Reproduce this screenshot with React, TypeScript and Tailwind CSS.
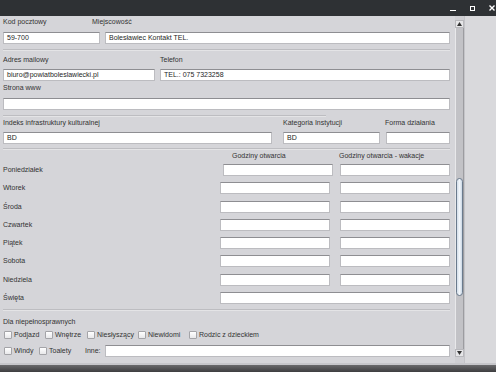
import React from "react";

const F = "font-['Liberation_Sans',Arial,sans-serif]";

function Inp({ w, ml = 0, mt = 0, v = "" }: { w: number; ml?: number; mt?: number; v?: string }) {
  return (
    <div
      className="h-[12px] shrink-0 bg-white border border-[#bcbcc0] border-t-[#8e8e92] text-[7px] leading-[10px] pl-[3px] text-[#1e1e1e] whitespace-nowrap overflow-hidden"
      style={{ width: w, marginLeft: ml, marginTop: mt }}
    >
      {v}
    </div>
  );
}

function Lbl({ w, children }: { w?: number; children: React.ReactNode }) {
  return (
    <div className="h-[8px] shrink-0 text-[7px] leading-[8px] text-[#333] whitespace-nowrap" style={w ? { width: w } : undefined}>
      {children}
    </div>
  );
}

function Sep({ w = 447, mt }: { w?: number; mt: number }) {
  return <div className="h-[2px] border-t border-[#bdbdc1] border-b border-b-[#e4e4e6] ml-[3px]" style={{ width: w, marginTop: mt }} />;
}

function Cb({ w, label }: { w: number; label: string }) {
  return (
    <div className="flex items-center shrink-0" style={{ width: w }}>
      <div className="w-[8px] h-[8px] border border-[#a4a4a8] bg-gradient-to-b from-white to-[#e8e8ea] rounded-[1px]" />
      <span className="ml-[2px] text-[7px] leading-[8px] text-[#333]">{label}</span>
    </div>
  );
}

const days: { name: string; mt: number; ml: number }[] = [
  { name: "Poniedziałek", mt: 4, ml: 223 },
  { name: "Wtorek", mt: 6, ml: 220 },
  { name: "Środa", mt: 7, ml: 220 },
  { name: "Czwartek", mt: 6, ml: 220 },
  { name: "Piątek", mt: 6, ml: 220 },
  { name: "Sobota", mt: 6, ml: 220 },
  { name: "Niedziela", mt: 7, ml: 220 },
];

export default function App() {
  return (
    <div className={`w-[496px] h-[372px] flex flex-col bg-[#d5d5d9] overflow-hidden ${F}`}>
      {/* title bar */}
      <div className="h-[16px] bg-[#2e3134] flex items-center justify-end shrink-0">
        <div className="w-[6px] h-[1px] bg-white mt-[5px] mr-[14px]" />
        <div className="w-[5px] h-[5px] border-[1.5px] border-white mr-[14px]" />
        <svg width="6" height="6" viewBox="0 0 6 6" className="mr-[1px]">
          <path d="M0.5 0.5 L5.5 5.5 M5.5 0.5 L0.5 5.5" stroke="white" strokeWidth="1.4" />
        </svg>
      </div>
      <div className="h-[347px] flex shrink-0">
        {/* form */}
        <div className="w-[455px] flex flex-col shrink-0">
          <div className="flex mt-[2px] pl-[3px]">
            <Lbl w={89}>Kod pocztowy</Lbl>
            <Lbl>Miejscowość</Lbl>
          </div>
          <div className="flex mt-[6px]">
            <Inp w={97} ml={3} v="59-700" />
            <Inp w={345} ml={5} v="Bolesławiec Kontakt TEL." />
          </div>
          <Sep mt={5} />
          <div className="flex mt-[5px] pl-[3px]">
            <Lbl w={157}>Adres mailowy</Lbl>
            <Lbl>Telefon</Lbl>
          </div>
          <div className="flex mt-[5px]">
            <Inp w={152} ml={3} v="biuro@powiatboleslawiecki.pl" />
            <Inp w={290} ml={5} v="TEL.: 075 7323258" />
          </div>
          <div className="flex mt-[3px] pl-[3px]">
            <Lbl>Strona www</Lbl>
          </div>
          <Inp w={447} ml={3} mt={6} />
          <Sep w={323} mt={5} />
          <div className="flex mt-[2px] pl-[3px]">
            <Lbl w={280}>Indeks infrastruktury kulturalnej</Lbl>
            <Lbl w={102}>Kategoria Instytucji</Lbl>
            <Lbl>Forma działania</Lbl>
          </div>
          <div className="flex mt-[5px]">
            <Inp w={269} ml={3} v="BD" />
            <Inp w={97} ml={11} v="BD" />
            <Inp w={64} ml={6} />
          </div>
          <Sep mt={4} />
          <div className="flex mt-[2px] pl-[232px]">
            <Lbl w={107}>Godziny otwarcia</Lbl>
            <Lbl>Godziny otwarcia - wakacje</Lbl>
          </div>
          {days.map((d) => (
            <div key={d.name} className="flex items-center h-[12px]" style={{ marginTop: d.mt }}>
              <div className="text-[7px] leading-[8px] text-[#333] pl-[3px] shrink-0" style={{ width: d.ml }}>
                {d.name}
              </div>
              <Inp w={110} />
              <Inp w={110} ml={d.ml === 223 ? 7 : 10} />
            </div>
          ))}
          <div className="flex items-center h-[12px] mt-[6px]">
            <div className="text-[7px] leading-[8px] text-[#333] pl-[3px] w-[220px] shrink-0">Święta</div>
            <Inp w={230} />
          </div>
          <Sep mt={5} />
          <div className="flex mt-[7px] pl-[3px]">
            <Lbl>Dla niepełnosprawnych</Lbl>
          </div>
          <div className="flex items-center h-[10px] mt-[4px] pl-[4px]">
            <Cb w={41} label="Podjazd" />
            <Cb w={42} label="Wnętrze" />
            <Cb w={51} label="Niesłyszący" />
            <Cb w={51} label="Niewidomi" />
            <Cb w={100} label="Rodzic z dzieckiem" />
          </div>
          <div className="flex items-center h-[12px] mt-[5px] pl-[4px]">
            <Cb w={35} label="Windy" />
            <Cb w={46} label="Toalety" />
            <div className="w-[20px] text-[7px] leading-[8px] text-[#333] shrink-0">Inne:</div>
            <Inp w={345} />
          </div>
        </div>
        {/* scrollbar */}
        <div className="w-[9px] shrink-0 flex flex-col pt-[4px] pb-[6px] bg-[#cfcfd3]">
          <div className="h-[8px] flex items-center justify-center bg-[#e6e6e8] border border-[#b8b8bc]">
            <svg width="5" height="4" viewBox="0 0 5 4">
              <path d="M2.5 0 L5 4 L0 4 Z" fill="#333" />
            </svg>
          </div>
          <div className="flex-1 flex flex-col bg-[#c2c2c6] border-l border-[#e8e8ea] border-r border-r-[#9c9ca0]">
            <div className="h-[150px]" />
            <div className="h-[118px] rounded-[4px] border border-[#6a7a8c] bg-gradient-to-r from-[#d3deea] via-[#f2f6fa] to-[#cbd8e6]" />
            <div className="flex-1" />
          </div>
          <div className="h-[8px] flex items-center justify-center bg-[#e6e6e8] border border-[#b8b8bc]">
            <svg width="5" height="4" viewBox="0 0 5 4">
              <path d="M0 0 L5 0 L2.5 4 Z" fill="#333" />
            </svg>
          </div>
        </div>
        {/* right area */}
        <div className="flex-1 bg-[#d9d9dc] border-l border-[#c4c4c8]" />
      </div>
      <div className="h-[2px] bg-[#c6c6ca] shrink-0" />
      <div className="flex-1 bg-gradient-to-b from-[#6a6a6c] to-[#3e3e40]" />
    </div>
  );
}
